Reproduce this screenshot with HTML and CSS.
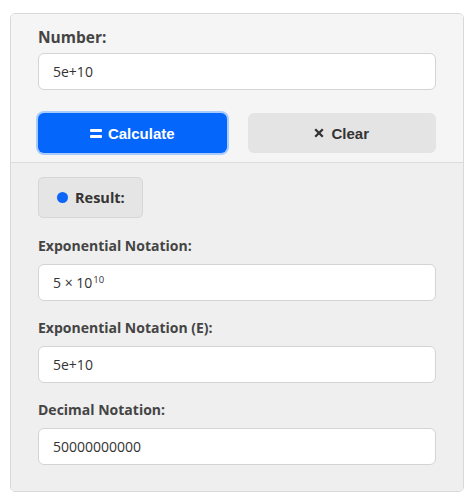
FILE: index.html
```html
<!DOCTYPE html>
<html>
<head>
<meta charset="utf-8">
<link rel="stylesheet" href="styles.css">
</head>
<body>
<div class="card">
  <div class="top">
    <label class="label-lg">Number:</label>
    <div class="field"><span>5e+10</span></div>
    <div class="buttons">
      <button class="btn btn-primary"><span class="eq"><i></i><i></i></span>Calculate</button>
      <button class="btn btn-secondary"><svg class="x" viewBox="0 0 10 10" width="10" height="10"><path d="M1.2 1.2 L8.8 8.8 M8.8 1.2 L1.2 8.8" stroke="#333" stroke-width="2.3" stroke-linecap="butt"/></svg>Clear</button>
    </div>
  </div>
  <div class="bottom">
    <div class="badge"><span class="dot"></span>Result:</div>
    <label class="label">Exponential Notation:</label>
    <div class="field"><span>5 × 10<sup>10</sup></span></div>
    <label class="label">Exponential Notation (E):</label>
    <div class="field"><span>5e+10</span></div>
    <label class="label">Decimal Notation:</label>
    <div class="field"><span>50000000000</span></div>
  </div>
</div>
</body>
</html>
```

FILE: styles.css
```css
* { box-sizing: border-box; }
body {
  margin: 0;
  padding: 13px 10px 12px 10px;
  background: #fff;
  font-family: "Open Sans", "Noto Sans", sans-serif;
}
.card {
  border: 1px solid #d9d9d9;
  border-radius: 5px;
  overflow: hidden;
  height: 479px;
  display: flex;
  flex-direction: column;
}
.top {
  background: #f5f5f5;
  padding: 12px 27px 9px 27px;
  display: flex;
  flex-direction: column;
  border-bottom: 1px solid #dcdcdc;
}
.bottom {
  background: #efefef;
  padding: 14px 27px 0 27px;
  flex: 1;
  display: flex;
  flex-direction: column;
}
.label-lg {
  font-weight: 700;
  font-size: 15.5px;
  line-height: 22px;
  color: #444;
  margin-bottom: 5px;
}
.label {
  font-weight: 700;
  font-size: 14px;
  line-height: 20px;
  color: #444;
  margin-top: 17px;
  margin-bottom: 8px;
}
.label:first-of-type { margin-top: 18px; }
.field {
  height: 37px;
  background: #fff;
  border: 1px solid #d4d4d4;
  border-radius: 6px;
  padding: 0 14px;
  font-size: 14px;
  color: #333;
  display: flex;
  align-items: center;
}
.field sup {
  font-size: 9.5px;
  vertical-align: 5px;
  line-height: 0;
  margin-left: 1px;
}
.buttons {
  display: flex;
  gap: 21px;
  margin-top: 23px;
}
.btn {
  flex: 1;
  height: 40px;
  border-radius: 6px;
  border: none;
  font-family: "Liberation Sans", Arial, sans-serif;
  font-weight: 700;
  font-size: 15px;
  display: flex;
  align-items: center;
  justify-content: center;
  gap: 6px;
  padding: 0;
}
.btn-primary {
  background: #0566fb;
  color: #fff;
  box-shadow: 0 0 0 2px #a9cbfb;
}
.btn-secondary {
  background: #e4e4e4;
  color: #333;
}
.eq {
  display: flex;
  flex-direction: column;
  gap: 3px;
  width: 12px;
}
.eq i {
  display: block;
  height: 3px;
  background: #fff;
  border-radius: 1px;
}
.x { display: block; margin-right: 1px; }
.badge {
  align-self: flex-start;
  width: 105px;
  height: 41px;
  background: #e5e5e5;
  border: 1px solid #d6d6d6;
  border-radius: 5px;
  display: flex;
  align-items: center;
  padding-left: 18px;
  gap: 7px;
  font-weight: 700;
  font-size: 14.5px;
  color: #333;
}
.dot {
  width: 11px;
  height: 11px;
  border-radius: 50%;
  background: #0d66f6;
}
```
